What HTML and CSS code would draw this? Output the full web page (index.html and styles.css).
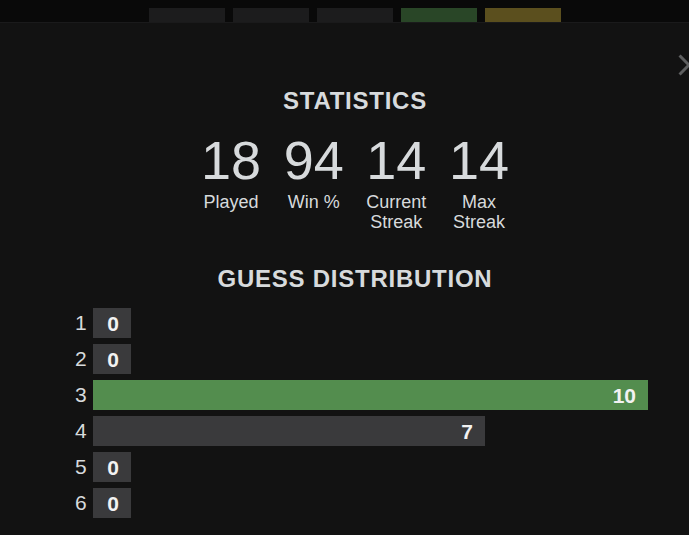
FILE: index.html
```html
<!DOCTYPE html>
<html lang="en">
<head>
<meta charset="utf-8">
<title>Statistics</title>
<link rel="stylesheet" href="styles.css">
</head>
<body>
<div class="page">
  <div class="strip">
    <div class="tiles">
      <div class="tile"></div>
      <div class="tile"></div>
      <div class="tile"></div>
      <div class="tile tile-green"></div>
      <div class="tile tile-yellow"></div>
    </div>
  </div>
  <div class="modal">
    <button class="close" aria-label="Close">
      <svg viewBox="0 0 24 24" width="36" height="36"><path d="M19 6.41L17.59 5 12 10.59 6.41 5 5 6.41 10.59 12 5 17.59 6.41 19 12 13.41 17.59 19 19 17.59 13.41 12z"/></svg>
    </button>
    <h1 class="title">Statistics</h1>
    <div class="stats">
      <div class="stat"><div class="num">18</div><div class="label">Played</div></div>
      <div class="stat"><div class="num">94</div><div class="label">Win %</div></div>
      <div class="stat"><div class="num">14</div><div class="label">Current<br>Streak</div></div>
      <div class="stat"><div class="num">14</div><div class="label">Max<br>Streak</div></div>
    </div>
    <h1 class="title dist-title">Guess Distribution</h1>
    <div class="dist">
      <div class="row"><div class="guess">1</div><div class="graph"><div class="bar" style="width:38px">0</div></div></div>
      <div class="row"><div class="guess">2</div><div class="graph"><div class="bar" style="width:38px">0</div></div></div>
      <div class="row"><div class="guess">3</div><div class="graph"><div class="bar bar-win" style="width:555px">10</div></div></div>
      <div class="row"><div class="guess">4</div><div class="graph"><div class="bar" style="width:392px">7</div></div></div>
      <div class="row"><div class="guess">5</div><div class="graph"><div class="bar" style="width:38px">0</div></div></div>
      <div class="row"><div class="guess">6</div><div class="graph"><div class="bar" style="width:38px">0</div></div></div>
    </div>
  </div>
</div>
</body>
</html>
```

FILE: styles.css
```css
html, body {
  margin: 0;
  padding: 0;
  background: #121212;
  overflow: hidden;
}
body {
  font-family: "Liberation Sans", Arial, Helvetica, sans-serif;
  color: #d7dadc;
}
.page {
  width: 710px;
  height: 535px;
  display: flex;
  flex-direction: column;
}
.strip {
  height: 22px;
  background: #090909;
  overflow: hidden;
  flex: none;
}
.tiles {
  display: flex;
  justify-content: center;
  gap: 8px;
  padding-top: 8px;
}
.tile {
  width: 76px;
  height: 30px;
  background: #1c1c1d;
}
.tile-green { background: #294627; }
.tile-yellow { background: #5b4f1e; }
.modal {
  position: relative;
  flex: 1;
  background: #121212;
  border-top: 1px solid #1a1a1b;
  padding-top: 64px;
}
.close {
  position: absolute;
  top: 24px;
  left: 671px;
  width: 36px;
  height: 36px;
  padding: 0;
  border: 0;
  background: none;
  display: block;
}
.close svg {
  display: block;
  fill: #5e5f60;
}
.title {
  margin: 0;
  font-size: 24px;
  line-height: 28px;
  font-weight: 700;
  letter-spacing: 0.75px;
  text-transform: uppercase;
  text-align: center;
}
.stats {
  display: flex;
  justify-content: center;
  margin-top: 15px;
}
.stat {
  width: 82.67px;
  text-align: center;
}
.num {
  font-size: 54px;
  line-height: 60px;
}
.label {
  font-size: 18px;
  line-height: 20px;
  margin-top: 2px;
}
.dist-title {
  margin-top: 33px;
}
.dist {
  margin-top: 15px;
  padding-left: 75px;
  display: flex;
  flex-direction: column;
  gap: 6px;
}
.row {
  display: flex;
  align-items: center;
  height: 30px;
}
.guess {
  width: 12px;
  margin-right: 6px;
  font-size: 21px;
  line-height: 30px;
}
.graph {
  width: 555px;
  height: 30px;
}
.bar {
  box-sizing: border-box;
  height: 30px;
  background: #3a3a3c;
  display: flex;
  justify-content: flex-end;
  align-items: center;
  padding-right: 12px;
  padding-top: 2px;
  font-size: 21px;
  font-weight: 700;
  color: #f2f2f2;
}
.bar-win {
  background: #538d4e;
}
```
